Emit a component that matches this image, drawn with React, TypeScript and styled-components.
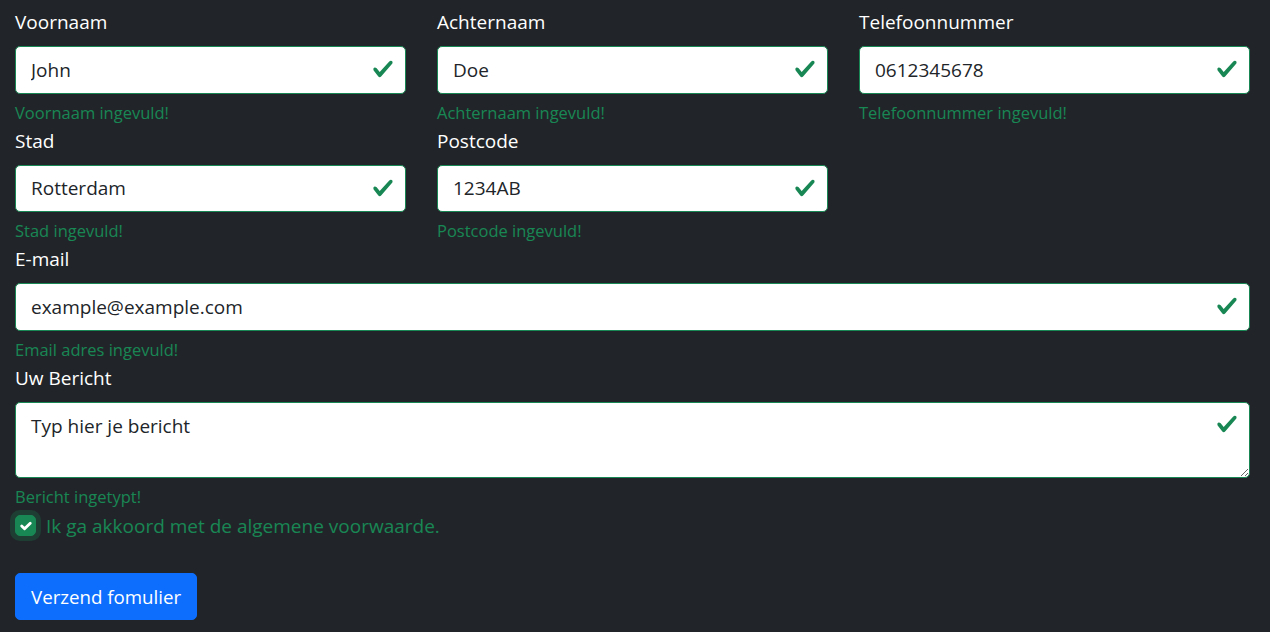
import React from "react";
import styled, { createGlobalStyle } from "styled-components";

const GlobalStyle = createGlobalStyle`
  * { box-sizing: border-box; }
  html, body { margin: 0; padding: 0; }
  body {
    background: #212529;
    font-family: "Open Sans", "Noto Sans", "Liberation Sans", sans-serif;
    font-size: 20px;
    line-height: 1.5;
    color: #ffffff;
  }
`;

const Page = styled.form`
  padding: 7px 20px 12px 15px;
`;

const Grid = styled.div`
  display: grid;
  grid-template-columns: repeat(3, 1fr);
  column-gap: 31px;
`;

const Field = styled.div<{ $span?: number }>`
  grid-column: span ${(p) => p.$span ?? 1};
  display: flex;
  flex-direction: column;
`;

const Label = styled.label`
  font-size: 19px;
  line-height: 30px;
  color: #ffffff;
  margin-bottom: 9px;
`;

const InputWrap = styled.div`
  position: relative;
`;

const Input = styled.input`
  display: block;
  width: 100%;
  height: 47.5px;
  padding: 0 48px 0 15px;
  font-family: inherit;
  font-size: 19px;
  color: #212529;
  background: #ffffff;
  border: 1px solid #198754;
  border-radius: 5px;
  outline: none;
`;

const TextArea = styled.textarea`
  display: block;
  width: 100%;
  height: 76px;
  padding: 9px 48px 9px 15px;
  font-family: inherit;
  font-size: 19px;
  line-height: 1.5;
  color: #212529;
  background: #ffffff;
  border: 1px solid #198754;
  border-radius: 5px;
  outline: none;
  resize: vertical;
  margin: 0;
`;

const CheckIcon = styled.svg<{ $top?: boolean }>`
  position: absolute;
  right: 12px;
  width: 22px;
  height: 22px;
  top: ${(p) => (p.$top ? "11px" : "12px")};
  pointer-events: none;
`;

const Feedback = styled.div`
  margin-top: 5px;
  font-size: 16.5px;
  line-height: 27px;
  color: #198754;
`;

const CheckRow = styled.label`
  display: flex;
  align-items: center;
  gap: 10px;
  margin-top: 1px;
  font-size: 19px;
  line-height: 30px;
  color: #198754;
`;

const CheckBox = styled.span`
  width: 21px;
  height: 21px;
  border-radius: 5px;
  background: #198754;
  border: 1px solid #198754;
  box-shadow: 0 0 0 5px rgba(25, 135, 84, 0.25);
  display: flex;
  align-items: center;
  justify-content: center;
  flex-shrink: 0;
`;

const Button = styled.button`
  margin-top: 32px;
  height: 47.5px;
  padding: 0 15px;
  font-family: inherit;
  font-size: 18.7px;
  color: #ffffff;
  background: #0d6efd;
  border: 1px solid #0d6efd;
  border-radius: 5px;
  cursor: pointer;
`;

const ValidCheck: React.FC<{ top?: boolean }> = ({ top }) => (
  <CheckIcon $top={top} viewBox="0 0 8 8">
    <path
      fill="#198754"
      d="M2.3 6.73.6 4.53c-.4-1.04.46-1.4 1.1-.8l1.1 1.4 3.4-3.8c.6-.63 1.6-.27 1.2.7l-4 4.6c-.43.5-.8.4-1.1.1z"
    />
  </CheckIcon>
);

type F = { label: string; value: string; feedback: string; span?: number };

const fields: F[] = [
  { label: "Voornaam", value: "John", feedback: "Voornaam ingevuld!" },
  { label: "Achternaam", value: "Doe", feedback: "Achternaam ingevuld!" },
  { label: "Telefoonnummer", value: "0612345678", feedback: "Telefoonnummer ingevuld!" },
  { label: "Stad", value: "Rotterdam", feedback: "Stad ingevuld!" },
  { label: "Postcode", value: "1234AB", feedback: "Postcode ingevuld!" },
  { label: "E-mail", value: "example@example.com", feedback: "Email adres ingevuld!", span: 3 },
];

export default function App() {
  return (
    <>
      <GlobalStyle />
      <Page onSubmit={(e) => e.preventDefault()}>
        <Grid>
          {fields.map((f) => (
            <Field key={f.label} $span={f.span}>
              <Label>{f.label}</Label>
              <InputWrap>
                <Input defaultValue={f.value} />
                <ValidCheck />
              </InputWrap>
              <Feedback>{f.feedback}</Feedback>
            </Field>
          ))}
          <Field $span={3}>
            <Label>Uw Bericht</Label>
            <InputWrap>
              <TextArea defaultValue="Typ hier je bericht" />
              <ValidCheck top />
            </InputWrap>
            <Feedback>Bericht ingetypt!</Feedback>
          </Field>
        </Grid>
        <CheckRow>
          <CheckBox>
            <svg width="20" height="20" viewBox="0 0 20 20">
              <path
                fill="none"
                stroke="#fff"
                strokeLinecap="round"
                strokeLinejoin="round"
                strokeWidth="3"
                d="m6 10 3 3 6-6"
              />
            </svg>
          </CheckBox>
          Ik ga akkoord met de algemene voorwaarde.
        </CheckRow>
        <Button type="submit">Verzend fomulier</Button>
      </Page>
    </>
  );
}
